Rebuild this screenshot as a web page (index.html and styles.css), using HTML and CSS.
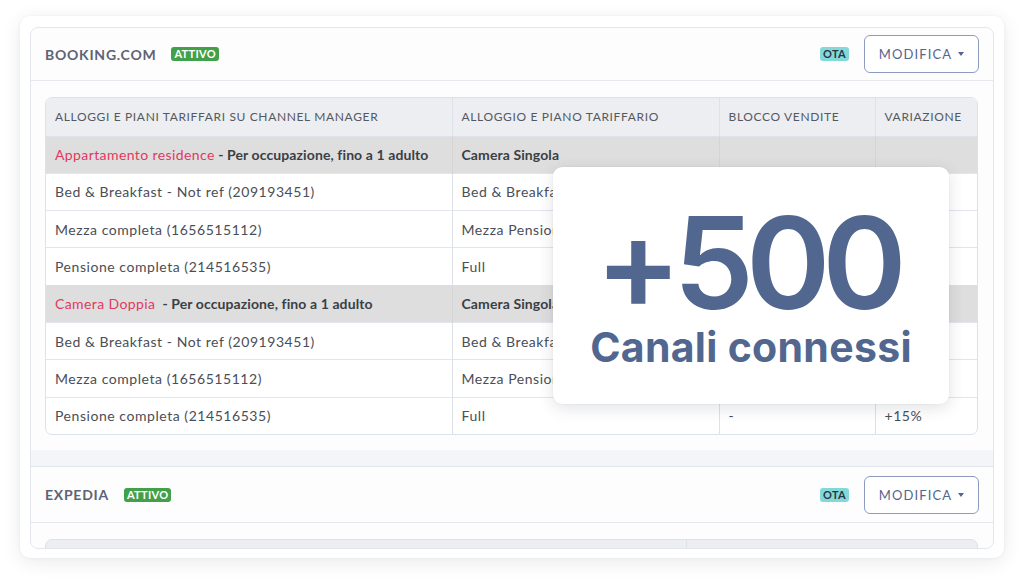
FILE: index.html
```html
<!DOCTYPE html>
<html lang="it">
<head>
<meta charset="utf-8">
<title>Canali</title>
<link rel="stylesheet" href="styles.css">
</head>
<body>
<div class="frame">
  <div class="panel">
    <section class="channel">
      <header class="channel-head">
        <div class="channel-title">
          <span class="channel-name">BOOKING.COM</span>
          <span class="badge badge-green">ATTIVO</span>
        </div>
        <div class="channel-actions">
          <span class="badge badge-teal">OTA</span>
          <button class="btn-outline">MODIFICA <span class="caret"></span></button>
        </div>
      </header>
      <div class="channel-body">
        <div class="table-wrap">
          <table class="map-table">
            <colgroup>
              <col class="c1"><col class="c2"><col class="c3"><col class="c4">
            </colgroup>
            <thead>
              <tr>
                <th>Alloggi e piani tariffari su channel manager</th>
                <th>Alloggio e piano tariffario</th>
                <th>Blocco vendite</th>
                <th>Variazione</th>
              </tr>
            </thead>
            <tbody>
              <tr class="group">
                <td><span class="room">Appartamento residence</span> - Per occupazione, fino a 1 adulto</td>
                <td>Camera Singola</td>
                <td></td>
                <td></td>
              </tr>
              <tr>
                <td>Bed &amp; Breakfast - Not ref (209193451)</td>
                <td>Bed &amp; Breakfast</td>
                <td>-</td>
                <td>+10%</td>
              </tr>
              <tr>
                <td>Mezza completa (1656515112)</td>
                <td>Mezza Pensione</td>
                <td>-</td>
                <td>+10%</td>
              </tr>
              <tr>
                <td>Pensione completa (214516535)</td>
                <td>Full</td>
                <td>-</td>
                <td>+15%</td>
              </tr>
              <tr class="group">
                <td><span class="room">Camera Doppia</span>&nbsp; - Per occupazione, fino a 1 adulto</td>
                <td>Camera Singola</td>
                <td></td>
                <td></td>
              </tr>
              <tr>
                <td>Bed &amp; Breakfast - Not ref (209193451)</td>
                <td>Bed &amp; Breakfast</td>
                <td>-</td>
                <td>+10%</td>
              </tr>
              <tr>
                <td>Mezza completa (1656515112)</td>
                <td>Mezza Pensione</td>
                <td>-</td>
                <td>+10%</td>
              </tr>
              <tr>
                <td>Pensione completa (214516535)</td>
                <td>Full</td>
                <td>-</td>
                <td>+15%</td>
              </tr>
            </tbody>
          </table>
        </div>
      </div>
    </section>

    <section class="channel">
      <header class="channel-head channel-head-2">
        <div class="channel-title">
          <span class="channel-name">EXPEDIA</span>
          <span class="badge badge-green">ATTIVO</span>
        </div>
        <div class="channel-actions">
          <span class="badge badge-teal">OTA</span>
          <button class="btn-outline">MODIFICA <span class="caret"></span></button>
        </div>
      </header>
      <div class="channel-body">
        <div class="table-wrap table-stub">
          <div class="stub-col stub-left"></div>
          <div class="stub-col"></div>
        </div>
      </div>
    </section>
  </div>

  <div class="stat-card">
    <div class="stat-number">+500</div>
    <div class="stat-label">Canali connessi</div>
  </div>
</div>
</body>
</html>
```

FILE: styles.css
```css
* {
  box-sizing: border-box;
}

html, body {
  margin: 0;
  padding: 0;
  background: #ffffff;
}

body {
  font-family: Lato, "Open Sans", "Liberation Sans", sans-serif;
  color: #4b4f57;
  width: 1024px;
  height: 583px;
  overflow: hidden;
  padding: 16px 20px 0 20px;
}

.frame {
  position: relative;
  width: 984px;
  height: 542px;
  background: #ffffff;
  border-radius: 10px;
  box-shadow: 0 4px 18px rgba(40, 50, 70, 0.10), 0 0 3px rgba(40, 50, 70, 0.06);
  padding: 11px 10px 9px 10px;
}

.panel {
  height: 100%;
  border: 1px solid #e3e6ed;
  border-radius: 8px;
  background: #f4f5f8;
  overflow: hidden;
  display: flex;
  flex-direction: column;
  gap: 16px;
}

.channel {
  background: #fdfdfe;
  flex-shrink: 0;
}

.channel + .channel {
  border-top: 1px solid #e3e6ed;
  flex: 1;
}

.channel-head {
  height: 53px;
  display: flex;
  align-items: center;
  justify-content: space-between;
  padding: 0 14px;
  border-bottom: 1px solid #e6e8ee;
}

.channel-head-2 {
  height: 56px;
}

.channel-title {
  display: flex;
  align-items: center;
  gap: 15px;
}

.channel-name {
  font-size: 14px;
  font-weight: 700;
  letter-spacing: 0.75px;
  color: #5e6373;
}

.badge {
  display: inline-block;
  font-size: 11px;
  font-weight: 700;
  line-height: 14px;
  padding: 0 3px;
  border-radius: 3px;
  letter-spacing: 0.3px;
}

.badge-green {
  background: #41a049;
  color: #ffffff;
}

.badge-teal {
  background: #83d9d9;
  color: #2c3542;
}

.channel-actions {
  display: flex;
  align-items: center;
  gap: 15px;
}

.btn-outline {
  font-family: inherit;
  height: 38px;
  width: 115px;
  padding: 0;
  border: 1px solid #8d9bbf;
  border-radius: 6px;
  background: #ffffff;
  color: #56658c;
  font-size: 13px;
  letter-spacing: 1.1px;
  display: flex;
  align-items: center;
  justify-content: center;
  gap: 6px;
}

.caret {
  width: 0;
  height: 0;
  border-left: 3.5px solid transparent;
  border-right: 3.5px solid transparent;
  border-top: 4px solid #56658c;
}

.channel-body {
  padding: 16px 15px 15px 14px;
}

.table-wrap {
  border: 1px solid #dde1ea;
  border-radius: 7px;
  overflow: hidden;
  background: #ffffff;
}

.map-table {
  width: 100%;
  border-collapse: collapse;
  table-layout: fixed;
}

.c1 { width: 406px; }
.c2 { width: 267px; }
.c3 { width: 156px; }
.c4 { width: auto; }

.map-table th {
  height: 38px;
  background: #eceef2;
  text-align: left;
  font-weight: 400;
  font-size: 12px;
  letter-spacing: 0.64px;
  text-transform: uppercase;
  color: #55595f;
  padding: 0 9px;
  border-bottom: 1px solid #dde1ea;
}

.map-table td {
  height: 37.3px;
  padding: 0 9px;
  font-size: 14px;
  letter-spacing: 0.55px;
  color: #4a4e56;
  border-top: 1px solid #e2e5ec;
  white-space: nowrap;
  overflow: hidden;
}

.map-table th + th,
.map-table td + td {
  border-left: 1px solid #dde1ea;
}

.map-table tbody tr:first-child td {
  border-top: none;
}

.map-table tr.group td {
  background: #dedede;
  font-weight: 700;
  font-size: 14px;
  letter-spacing: 0.1px;
  color: #3b3e44;
  border-top-color: #dedede;
}

.map-table tr.group td + td {
  border-left-color: #d4d4d4;
}

.room {
  color: #e2385f;
  font-weight: 400;
  font-size: 14px;
  letter-spacing: 0.4px;
}

.table-stub {
  height: 30px;
  display: flex;
  background: #eceef2;
}

.stub-col {
  flex: 1;
}

.stub-left {
  flex: 0 0 641px;
  border-right: 1px solid #dde1ea;
}

.stat-card {
  position: absolute;
  left: 533px;
  top: 151px;
  width: 396px;
  height: 237px;
  background: #ffffff;
  border-radius: 9px;
  box-shadow: 0 4px 16px rgba(40, 50, 70, 0.14), 0 0 2px rgba(40, 50, 70, 0.08);
  display: flex;
  flex-direction: column;
  align-items: center;
  justify-content: center;
  color: #51678f;
  font-family: Inter, "Noto Sans", sans-serif;
}

.stat-number {
  font-size: 128px;
  font-weight: 600;
  line-height: 1;
  letter-spacing: -8px;
  margin-top: -5px;
  padding-right: 8px;
}

.stat-label {
  font-size: 41px;
  font-weight: 700;
  line-height: 1;
  letter-spacing: 0.3px;
  margin-top: 0;
}
```
